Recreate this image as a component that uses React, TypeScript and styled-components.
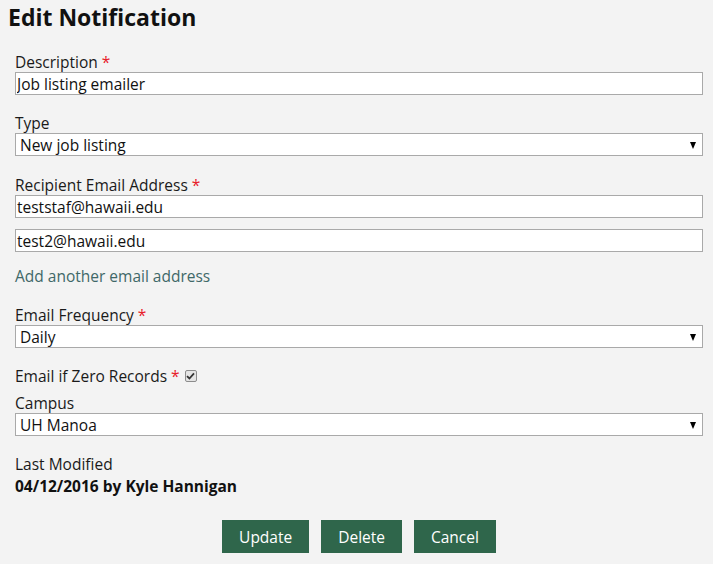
import React from "react";
import styled, { createGlobalStyle } from "styled-components";

const Global = createGlobalStyle`
  html, body { margin: 0; padding: 0; background: #f3f3f3; }
  body { font-family: "Open Sans", "Noto Sans", sans-serif; color: #1a1a1a; }
`;

const Page = styled.div`
  padding: 0 8px 8px 8px;
`;

const Title = styled.h1`
  margin: 0;
  padding-top: 2px;
  font-size: 23px;
  line-height: 30px;
  font-weight: 700;
  color: #111;
`;

const Form = styled.form`
  padding: 20px 2px 0 7px;
  display: flex;
  flex-direction: column;
`;

const Field = styled.div<{ $mb?: number }>`
  display: flex;
  flex-direction: column;
  margin-bottom: ${(p) => (p.$mb ?? 19)}px;
`;

const Label = styled.label`
  font-size: 15.5px;
  line-height: 20px;
  color: #1a1a1a;
  display: flex;
  align-items: center;
`;

const Req = styled.span`
  color: #e8202a;
  margin-left: 4px;
`;

const TextInput = styled.input<{ $mt?: number }>`
  box-sizing: border-box;
  width: 100%;
  height: 23px;
  margin: ${(p) => p.$mt ?? 0}px 0 0 0;
  padding: 0 1px;
  border: 1px solid #a9a9a9;
  background: #fff;
  font-family: inherit;
  font-size: 15.5px;
  color: #111;
  outline: none;
`;

const SelectWrap = styled.div`
  position: relative;
  &::after {
    content: "";
    position: absolute;
    right: 7px;
    top: 9px;
    border-left: 3.5px solid transparent;
    border-right: 3.5px solid transparent;
    border-top: 7px solid #000;
    pointer-events: none;
  }
`;

const Select = styled.select`
  box-sizing: border-box;
  width: 100%;
  height: 23px;
  margin: 0;
  padding: 0 20px 0 4px;
  border: 1px solid #a9a9a9;
  border-radius: 0;
  background: #fff;
  font-family: inherit;
  font-size: 15.5px;
  color: #111;
  appearance: none;
  -webkit-appearance: none;
  outline: none;
`;

const AddLink = styled.a`
  font-size: 15.5px;
  line-height: 20px;
  color: #3f6868;
  text-decoration: none;
  margin: 14px 0 19px 0;
`;

const CheckBox = styled.span`
  box-sizing: border-box;
  display: inline-flex;
  align-items: center;
  justify-content: center;
  width: 12px;
  height: 12px;
  margin-left: 5px;
  border: 1px solid #8c8c8c;
  border-radius: 2px;
  background: #e4e4e4;
`;

const Value = styled.div`
  margin-top: 1px;
  font-size: 15.5px;
  line-height: 23px;
  font-weight: 700;
  color: #111;
`;

const Buttons = styled.div`
  display: flex;
  justify-content: center;
  gap: 12px;
  margin-top: 22px;
`;

const Button = styled.button`
  height: 33px;
  padding: 0 17px;
  border: none;
  background: #2f664b;
  color: #fff;
  font-family: inherit;
  font-size: 15.5px;
  cursor: pointer;
`;

export default function App() {
  return (
    <Page>
      <Global />
      <Title>Edit Notification</Title>
      <Form onSubmit={(e) => e.preventDefault()}>
        <Field $mb={18}>
          <Label>
            Description<Req>*</Req>
          </Label>
          <TextInput defaultValue="Job listing emailer" />
        </Field>
        <Field>
          <Label>Type</Label>
          <SelectWrap>
            <Select defaultValue="New job listing">
              <option>New job listing</option>
            </Select>
          </SelectWrap>
        </Field>
        <Field $mb={0}>
          <Label>
            Recipient Email Address<Req>*</Req>
          </Label>
          <TextInput defaultValue="teststaf@hawaii.edu" />
          <TextInput $mt={11} defaultValue="test2@hawaii.edu" />
        </Field>
        <AddLink href="#">Add another email address</AddLink>
        <Field $mb={18}>
          <Label>
            Email Frequency<Req>*</Req>
          </Label>
          <SelectWrap>
            <Select defaultValue="Daily">
              <option>Daily</option>
            </Select>
          </SelectWrap>
        </Field>
        <Field $mb={7}>
          <Label>
            Email if Zero Records<Req>*</Req>
            <CheckBox>
              <svg width="9" height="8" viewBox="0 0 9 8">
                <path d="M1 4.2 L3.4 6.5 L8 1.3" fill="none" stroke="#333" strokeWidth="1.8" />
              </svg>
            </CheckBox>
          </Label>
        </Field>
        <Field $mb={18}>
          <Label>Campus</Label>
          <SelectWrap>
            <Select defaultValue="UH Manoa">
              <option>UH Manoa</option>
            </Select>
          </SelectWrap>
        </Field>
        <Field $mb={0}>
          <Label>Last Modified</Label>
          <Value>04/12/2016 by Kyle Hannigan</Value>
        </Field>
        <Buttons>
          <Button type="button">Update</Button>
          <Button type="button">Delete</Button>
          <Button type="button">Cancel</Button>
        </Buttons>
      </Form>
    </Page>
  );
}
